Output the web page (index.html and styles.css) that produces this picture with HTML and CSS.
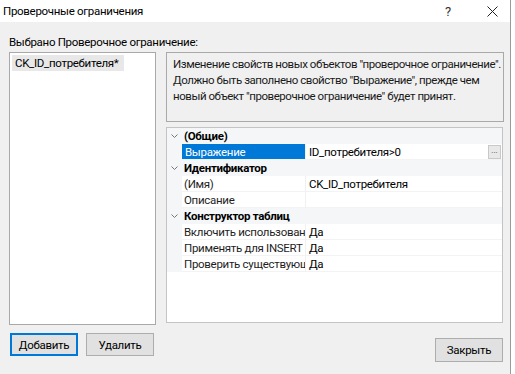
FILE: index.html
```html
<!DOCTYPE html>
<html lang="ru">
<head>
    <meta charset="UTF-8">
    <title>Проверочные ограничения</title>
    <link rel="stylesheet" href="styles.css">
</head>
<body>
    <div class="window">
        <div class="titlebar">
            <span class="title">Проверочные ограничения</span>
            <span class="help">?</span>
            <span class="close">
                <svg width="11" height="11" viewBox="0 0 11 11"><path d="M0.5 0.5 L10.5 10.5 M10.5 0.5 L0.5 10.5" stroke="#222" stroke-width="1" fill="none"/></svg>
            </span>
        </div>

        <div class="content">
            <div class="caption">Выбрано Проверочное ограничение:</div>
            <div class="main">
                <div class="left">
                    <div class="listbox">
                        <div class="list-item">CK_ID_потребителя*</div>
                    </div>
                    <div class="left-buttons">
                        <button class="btn btn-default">Добавить</button>
                        <button class="btn">Удалить</button>
                    </div>
                </div>

                <div class="right">
                    <div class="description">
                        Изменение свойств новых объектов "проверочное ограничение".<br>
                        Должно быть заполнено свойство "Выражение", прежде чем<br>
                        новый объект "проверочное ограничение" будет принят.
                    </div>

                    <!-- property grid -->
                    <div class="grid">
                        <div class="row category">
                            <span class="gutter"><svg width="7" height="5" viewBox="0 0 7 5"><path d="M0.5 0.5 L3.5 3.5 L6.5 0.5" stroke="#777" fill="none"/></svg></span>
                            <span class="cat-name">(Общие)</span>
                        </div>
                        <div class="row">
                            <span class="gutter"></span>
                            <span class="name selected">Выражение</span>
                            <span class="value">ID_потребителя&gt;0<span class="dots">...</span></span>
                        </div>
                        <div class="row category">
                            <span class="gutter"><svg width="7" height="5" viewBox="0 0 7 5"><path d="M0.5 0.5 L3.5 3.5 L6.5 0.5" stroke="#777" fill="none"/></svg></span>
                            <span class="cat-name">Идентификатор</span>
                        </div>
                        <div class="row">
                            <span class="gutter"></span>
                            <span class="name">(Имя)</span>
                            <span class="value">CK_ID_потребителя</span>
                        </div>
                        <div class="row">
                            <span class="gutter"></span>
                            <span class="name">Описание</span>
                            <span class="value"></span>
                        </div>
                        <div class="row category">
                            <span class="gutter"><svg width="7" height="5" viewBox="0 0 7 5"><path d="M0.5 0.5 L3.5 3.5 L6.5 0.5" stroke="#777" fill="none"/></svg></span>
                            <span class="cat-name">Конструктор таблиц</span>
                        </div>
                        <div class="row">
                            <span class="gutter"></span>
                            <span class="name">Включить использование</span>
                            <span class="value">Да</span>
                        </div>
                        <div class="row">
                            <span class="gutter"></span>
                            <span class="name">Применять для INSERT и UPDATE</span>
                            <span class="value">Да</span>
                        </div>
                        <div class="row">
                            <span class="gutter"></span>
                            <span class="name">Проверить существующие данные</span>
                            <span class="value">Да</span>
                        </div>
                    </div>

                    <div class="right-buttons">
                        <button class="btn">Закрыть</button>
                    </div>
                </div>
            </div>
        </div>
    </div>
</body>
</html>
```

FILE: styles.css
```css
html, body {
    margin: 0;
    height: 100%;
    background: #fff;
}
body {
    font-family: Roboto, "Noto Sans", sans-serif;
    font-size: 11.5px;
    letter-spacing: -0.3px;
    color: #000;
}
.window {
    width: 510px;
    height: 374px;
    border-right: 1px solid #9a9a9a;
    display: flex;
    flex-direction: column;
}
.titlebar {
    height: 22px;
    background: #fff;
    display: flex;
    align-items: center;
    padding-left: 3px;
}
.title {
    flex: 1;
    color: #000;
}
.help {
    width: 12px;
    margin-right: 30px;
    color: #333;
    font-size: 13px;
}
.close {
    margin-right: 12px;
    display: flex;
}
.content {
    flex: 1;
    background: #f0f0f0;
    padding: 0 6px 0 9px;
}
.caption {
    height: 30px;
    line-height: 16px;
    padding-top: 12px;
    box-sizing: border-box;
}
.main {
    display: flex;
    gap: 10px;
}
.left {
    width: 148px;
}
.listbox {
    height: 273px;
    box-sizing: border-box;
    background: #fff;
    border: 1px solid #a9a9a9;
    padding: 2px 2px;
}
.list-item {
    display: inline-block;
    background: #e8e8e8;
    padding: 0 5px 0 3px;
    line-height: 16px;
    white-space: nowrap;
}
.left-buttons {
    display: flex;
    gap: 8px;
    margin-top: 8px;
    padding-left: 1px;
}
.btn {
    font-family: inherit;
    font-size: 11.5px;
    letter-spacing: -0.3px;
    color: #000;
    background: #e1e1e1;
    border: 1px solid #adadad;
    height: 23px;
    width: 68px;
    padding: 0;
}
.btn-default {
    border: 2px solid #0078d7;
}
.right {
    width: 338px;
}
.description {
    height: 70px;
    box-sizing: border-box;
    background: #f0f0f0;
    border: 1px solid #a9a9a9;
    padding: 3px 3px 3px 6px;
    line-height: 16px;
    letter-spacing: -0.45px;
    white-space: nowrap;
    overflow: hidden;
    color: #1a1a1a;
}
.grid {
    margin-top: 5px;
    height: 196px;
    width: 337px;
    box-sizing: border-box;
    background: #fff;
    border: 1px solid #c4c4c4;
    padding-top: 0;
}
.row {
    display: flex;
    height: 16px;
    line-height: 16px;
    background: #fff;
}
.gutter {
    width: 15px;
    flex: none;
    background: #f5f6f7;
    display: flex;
    align-items: center;
    justify-content: center;
}
.category {
    background: #f5f6f7;
}
.cat-name {
    font-weight: bold;
    padding-left: 2px;
}
.name {
    width: 123px;
    flex: none;
    padding-left: 2px;
    box-sizing: border-box;
    white-space: nowrap;
    overflow: hidden;
    color: #1e1e1e;
    border-bottom: 1px solid #f3f3f3;
}
.name.selected {
    background: #0078d7;
    color: #fff;
    padding-left: 3px;
}
.value {
    flex: 1;
    padding-left: 3px;
    white-space: nowrap;
    overflow: hidden;
    display: flex;
    justify-content: space-between;
    border-left: 1px solid #f0f0f0;
    border-bottom: 1px solid #f3f3f3;
}
.dots {
    width: 11px;
    height: 12px;
    margin: 1px 1px 0 0;
    background: #e8e8e8;
    border: 1px solid #c8c8c8;
    font-size: 8px;
    line-height: 10px;
    letter-spacing: 0;
    text-align: center;
    color: #444;
}
.right-buttons {
    display: flex;
    justify-content: flex-end;
    margin-top: 15px;
    padding-right: 1px;
}
.right-buttons .btn {
    height: 24px;
}
```
